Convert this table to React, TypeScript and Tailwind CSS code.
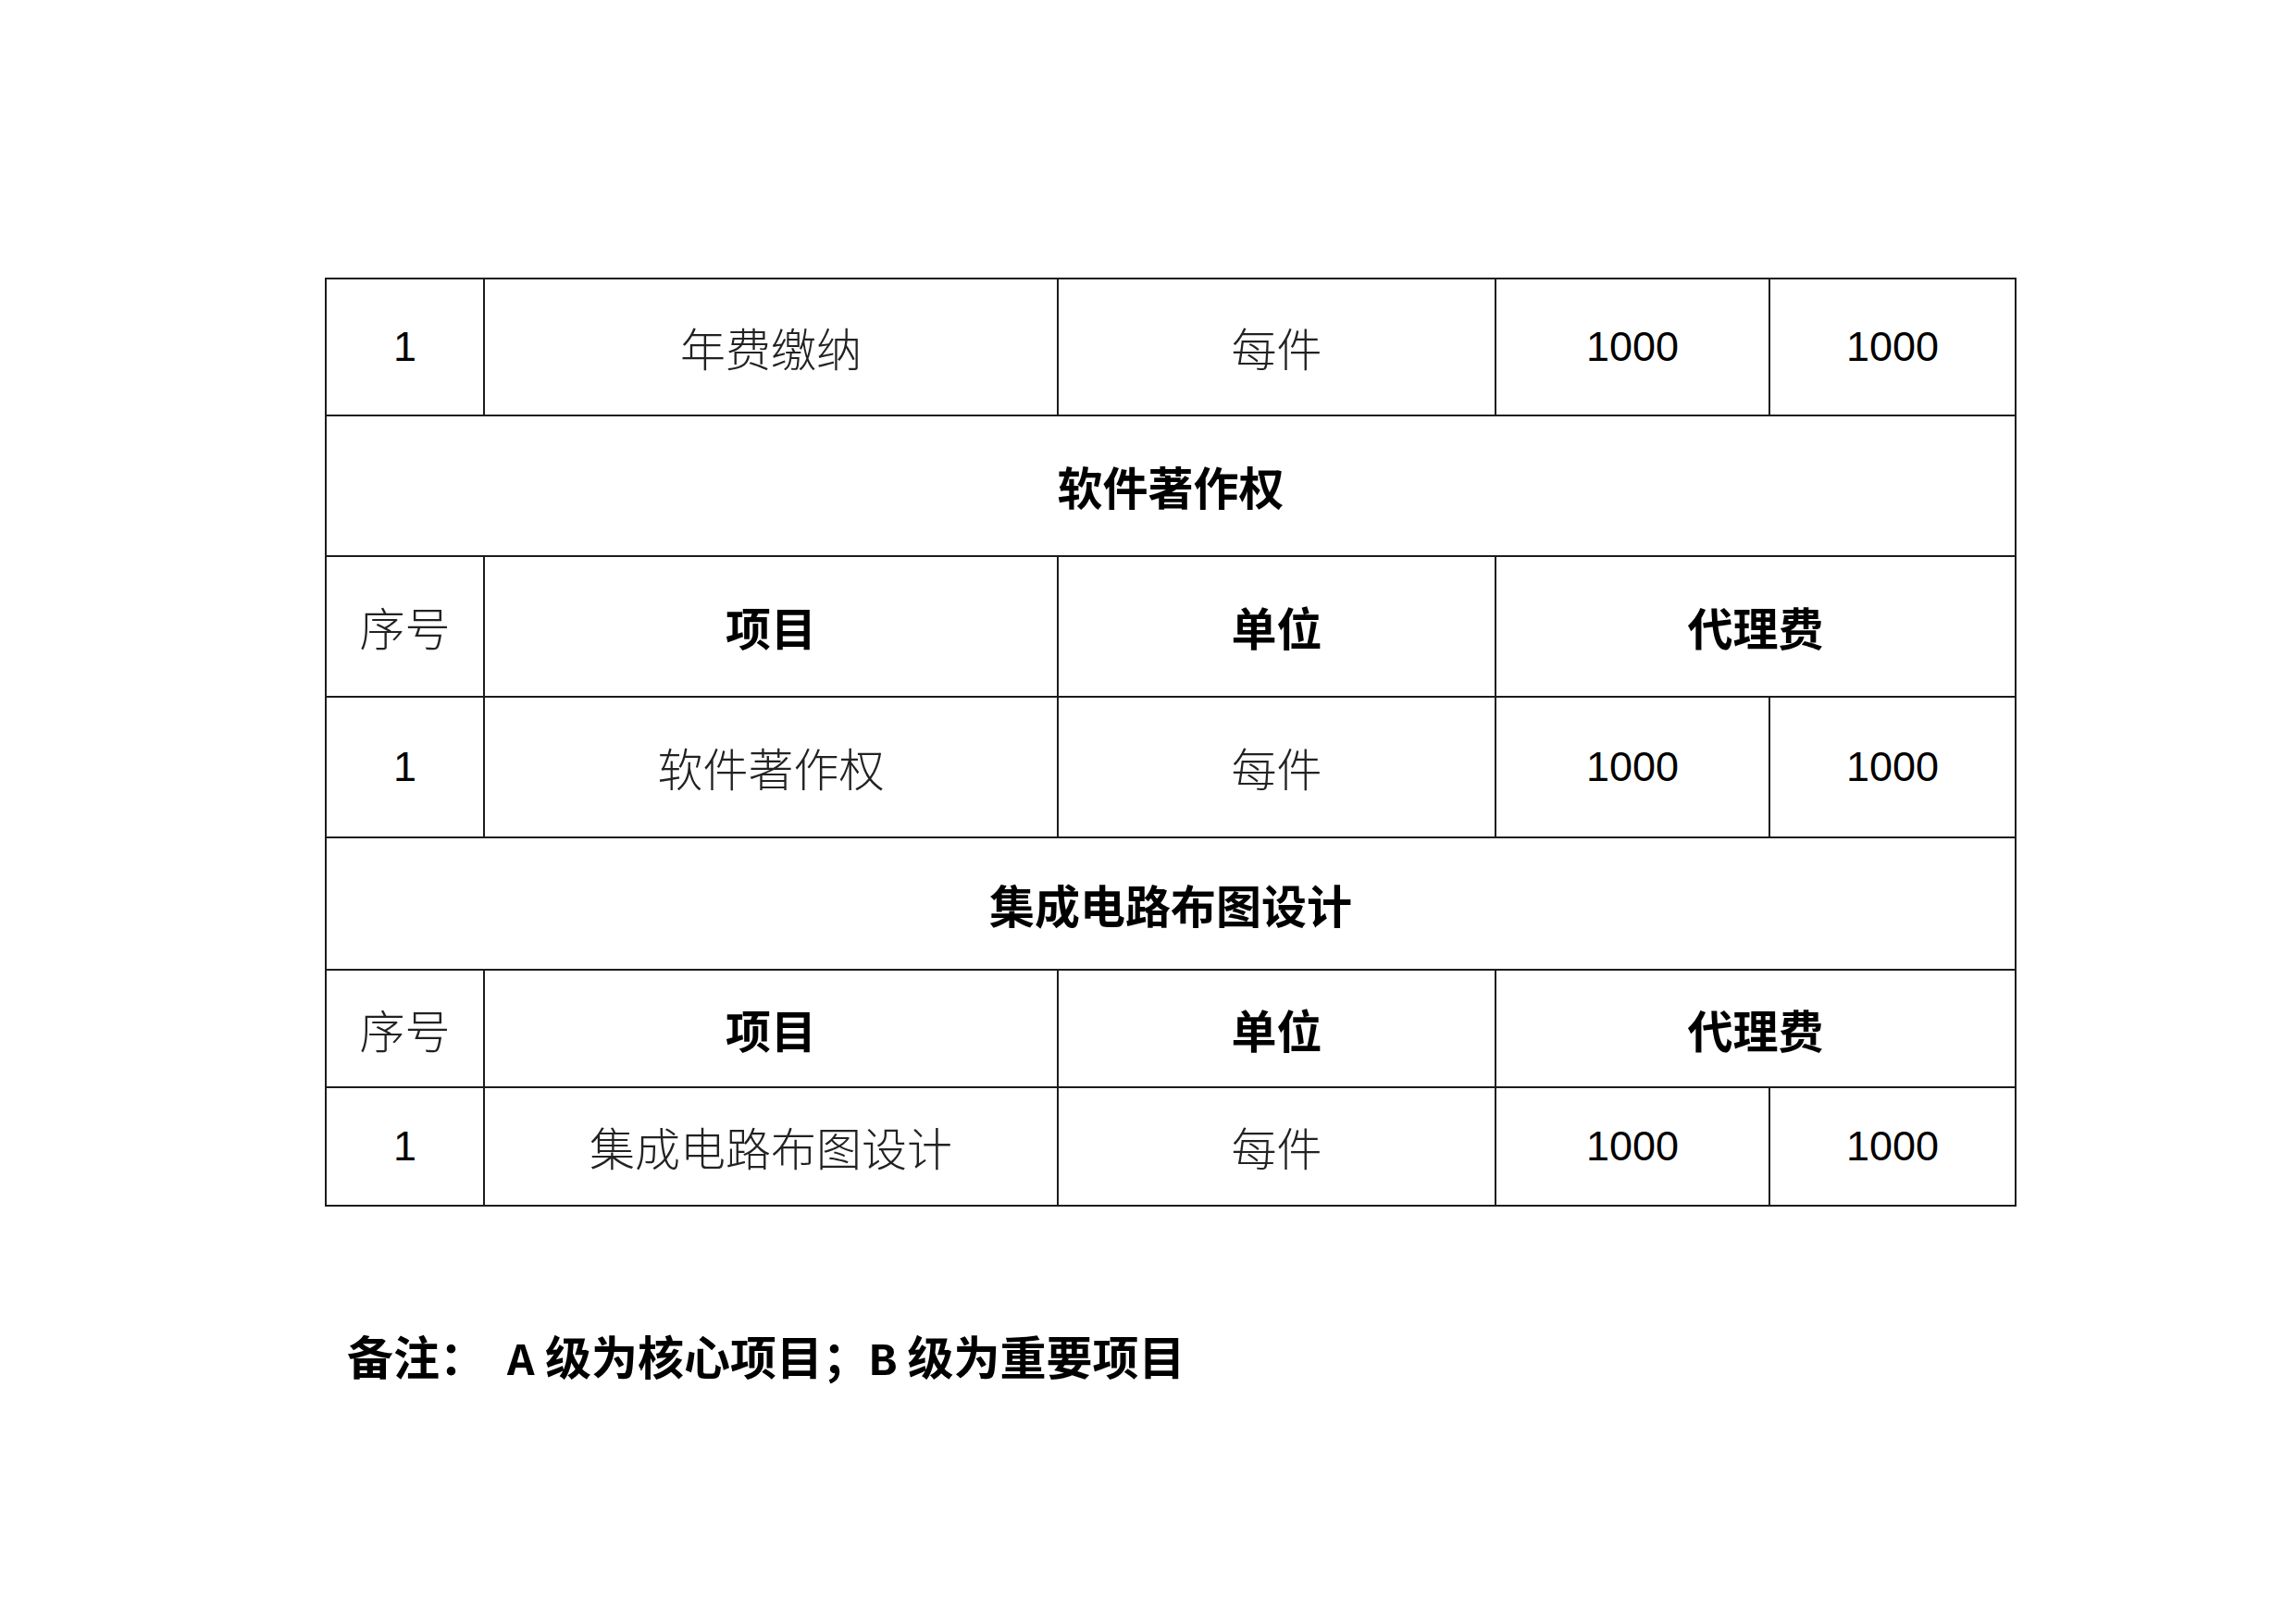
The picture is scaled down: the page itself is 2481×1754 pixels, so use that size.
const cjk = "font-['Noto_Sans_CJK_SC',sans-serif]";
const num = "font-['Liberation_Sans','Noto_Sans_CJK_SC',sans-serif]";

const cell = "border-2 border-[#1c1c1c] text-center align-middle p-0";

function DataRow({ name, h }: { name: string; h: string }) {
  return (
    <tr className={h}>
      <td className={`${cell} ${num} text-[45px] text-black`}>1</td>
      <td className={`${cell} ${cjk} font-light text-[49px] text-[#222]`}>{name}</td>
      <td className={`${cell} ${cjk} font-light text-[49px] text-[#222]`}>每件</td>
      <td className={`${cell} ${num} text-[45px] text-black`}>1000</td>
      <td className={`${cell} ${num} text-[45px] text-black`}>1000</td>
    </tr>
  );
}

function SectionRow({ title, h }: { title: string; h: string }) {
  return (
    <tr className={h}>
      <td colSpan={5} className={`${cell} ${cjk} font-bold text-[49px] text-black`}>
        {title}
      </td>
    </tr>
  );
}

function HeaderRow({ h }: { h: string }) {
  return (
    <tr className={h}>
      <td className={`${cell} ${cjk} font-light text-[49px] text-[#222]`}>序号</td>
      <td className={`${cell} ${cjk} font-bold text-[49px] text-black`}>项目</td>
      <td className={`${cell} ${cjk} font-bold text-[49px] text-black`}>单位</td>
      <td colSpan={2} className={`${cell} ${cjk} font-bold text-[49px] text-black`}>
        代理费
      </td>
    </tr>
  );
}

export default function App() {
  return (
    <div className="w-[2481px] h-[1754px] bg-white pt-[300px] pl-[351px] overflow-hidden">
      <table className="border-collapse table-fixed w-[1826px]">
        <colgroup>
          <col className="w-[171px]" />
          <col className="w-[620px]" />
          <col className="w-[473px]" />
          <col className="w-[296px]" />
          <col className="w-[266px]" />
        </colgroup>
        <tbody>
          <DataRow name="年费缴纳" h="h-[148px]" />
          <SectionRow title="软件著作权" h="h-[152px]" />
          <HeaderRow h="h-[152px]" />
          <DataRow name="软件著作权" h="h-[152px]" />
          <SectionRow title="集成电路布图设计" h="h-[143px]" />
          <HeaderRow h="h-[127px]" />
          <DataRow name="集成电路布图设计" h="h-[128px]" />
        </tbody>
      </table>

      <p className={`mt-[130px] ml-[24px] ${cjk} font-bold text-[50px] leading-[60px] text-black whitespace-pre`}>
        备注：  <span className="font-['Liberation_Mono',monospace]">A</span> 级为核心项目；<span className="font-['Liberation_Mono',monospace]">B</span> 级为重要项目
      </p>
    </div>
  );
}
